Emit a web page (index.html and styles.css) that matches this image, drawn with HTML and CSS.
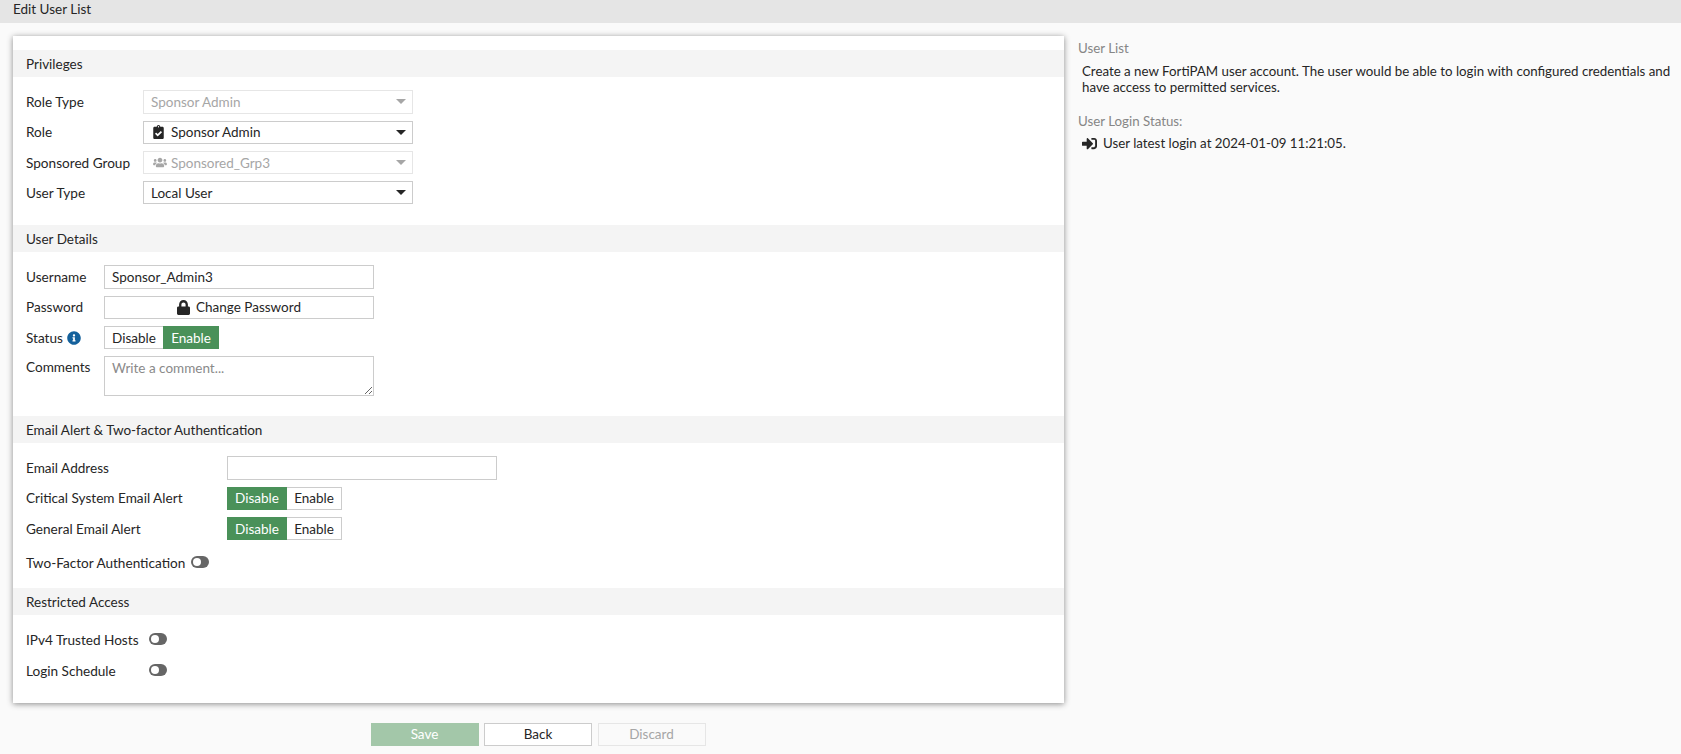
FILE: index.html
```html
<!DOCTYPE html>
<html lang="en">
<head>
<meta charset="utf-8">
<title>Edit User List</title>
<link rel="stylesheet" href="styles.css">
</head>
<body>
<header class="topbar">Edit User List</header>
<div class="page">
  <main class="main">
    <form class="card">
      <section class="section">
        <h2 class="bar">Privileges</h2>
        <div class="fields">
          <div class="row"><span class="label label-w1">Role Type</span>
            <div class="select select-off"><span class="select-text">Sponsor Admin</span><i class="caret"></i></div></div>
          <div class="row"><span class="label label-w1">Role</span>
            <div class="select"><span class="select-text"><svg class="ico ico-clip" viewBox="0 0 384 512"><path d="M336 64h-80c0-35.300-28.700-64-64-64s-64 28.700-64 64H48C21.500 64 0 85.500 0 112v352c0 26.500 21.500 48 48 48h288c26.500 0 48-21.500 48-48V112c0-26.500-21.500-48-48-48zM192 40c13.300 0 24 10.700 24 24s-10.700 24-24 24-24-10.700-24-24 10.700-24 24-24zm121.200 231.800l-143 141.800c-4.700 4.700-12.300 4.600-17-.1l-82.600-83.300c-4.700-4.700-4.600-12.300.1-17L99.100 285c4.700-4.700 12.300-4.600 17 .1l46 46.400 106-105.200c4.700-4.700 12.300-4.600 17 .1l28.200 28.400c4.700 4.800 4.600 12.300-.1 17z"/></svg>Sponsor Admin</span><i class="caret"></i></div></div>
          <div class="row"><span class="label label-w1">Sponsored Group</span>
            <div class="select select-off"><span class="select-text"><svg class="ico ico-users" viewBox="0 0 640 512"><path d="M96 224c35.300 0 64-28.700 64-64s-28.700-64-64-64-64 28.700-64 64 28.700 64 64 64zm448 0c35.300 0 64-28.700 64-64s-28.700-64-64-64-64 28.700-64 64 28.700 64 64 64zm32 32h-64c-17.600 0-33.500 7.100-45.100 18.600 40.300 22.100 68.900 62 75.100 109.400h66c17.700 0 32-14.300 32-32v-32c0-35.300-28.700-64-64-64zm-256 0c61.900 0 112-50.100 112-112S381.900 32 320 32 208 82.100 208 144s50.100 112 112 112zm76.800 32h-8.300c-20.800 10-43.900 16-68.500 16s-47.600-6-68.500-16h-8.300C179.600 288 128 339.600 128 403.200V432c0 26.500 21.500 48 48 48h288c26.500 0 48-21.500 48-48v-28.800c0-63.600-51.600-115.200-115.200-115.200zm-223.700-13.400C161.500 263.100 145.600 256 128 256H64c-35.300 0-64 28.700-64 64v32c0 17.700 14.300 32 32 32h65.900c6.300-47.400 34.900-87.300 75.200-109.400z"/></svg>Sponsored_Grp3</span><i class="caret"></i></div></div>
          <div class="row"><span class="label label-w1">User Type</span>
            <div class="select"><span class="select-text">Local User</span><i class="caret"></i></div></div>
        </div>
      </section>

      <section class="section">
        <h2 class="bar">User Details</h2>
        <div class="fields">
          <div class="row"><span class="label label-w2">Username</span>
            <input class="input" type="text" value="Sponsor_Admin3"></div>
          <div class="row"><span class="label label-w2">Password</span>
            <button class="wide-btn" type="button"><svg class="ico ico-lock" viewBox="0 0 448 512"><path d="M400 224h-24v-72C376 68.200 307.800 0 224 0S72 68.200 72 152v72H48c-26.500 0-48 21.500-48 48v192c0 26.500 21.500 48 48 48h352c26.500 0 48-21.500 48-48V272c0-26.500-21.500-48-48-48zm-104 0H152v-72c0-39.700 32.300-72 72-72s72 32.300 72 72v72z"/></svg>Change Password</button></div>
          <div class="row"><span class="label label-w2">Status <svg class="ico-info" viewBox="0 0 512 512"><path d="M256 8C119 8 8 119.100 8 256c0 137 111 248 248 248s248-111 248-248C504 119.100 393 8 256 8zm0 110c23.200 0 42 18.800 42 42s-18.800 42-42 42-42-18.800-42-42 18.800-42 42-42zm56 254c0 6.600-5.400 12-12 12h-88c-6.600 0-12-5.400-12-12v-24c0-6.600 5.400-12 12-12h12v-64h-12c-6.600 0-12-5.400-12-12v-24c0-6.600 5.400-12 12-12h64c6.600 0 12 5.400 12 12v100h12c6.600 0 12 5.400 12 12v24z"/></svg></span>
            <div class="seg"><span class="seg-item seg-d">Disable</span><span class="seg-item seg-e seg-on">Enable</span></div></div>
          <div class="row row-top"><span class="label label-w2 label-top">Comments</span>
            <textarea class="comment" placeholder="Write a comment..."></textarea></div>
        </div>
      </section>

      <section class="section">
        <h2 class="bar">Email Alert &amp; Two-factor Authentication</h2>
        <div class="fields fields-tight">
          <div class="row"><span class="label label-w3">Email Address</span>
            <input class="input" type="text"></div>
          <div class="row"><span class="label label-w3">Critical System Email Alert</span>
            <div class="seg"><span class="seg-item seg-d2 seg-on">Disable</span><span class="seg-item seg-e2">Enable</span></div></div>
          <div class="row"><span class="label label-w3">General Email Alert</span>
            <div class="seg"><span class="seg-item seg-d2 seg-on">Disable</span><span class="seg-item seg-e2">Enable</span></div></div>
          <div class="row row-switch row-switch-first"><span class="label label-auto">Two-Factor Authentication</span><span class="switch"></span></div>
        </div>
      </section>

      <section class="section">
        <h2 class="bar">Restricted Access</h2>
        <div class="fields fields-switches">
          <div class="row row-switch"><span class="label label-w4">IPv4 Trusted Hosts</span><span class="switch"></span></div>
          <div class="row row-switch"><span class="label label-w4">Login Schedule</span><span class="switch"></span></div>
        </div>
      </section>
    </form>

    <div class="actions">
      <button class="action action-save" type="button">Save</button>
      <button class="action" type="button">Back</button>
      <button class="action action-off" type="button">Discard</button>
    </div>
  </main>

  <aside class="help">
    <h3 class="help-title">User List</h3>
    <p class="help-text">Create a new FortiPAM user account. The user would be able to login with configured credentials and have access to permitted services.</p>
    <h3 class="help-title help-title-2">User Login Status:</h3>
    <p class="help-login"><svg class="ico ico-login" viewBox="0 0 512 512"><path d="M416 448h-84c-6.600 0-12-5.400-12-12v-40c0-6.600 5.400-12 12-12h84c17.700 0 32-14.300 32-32V160c0-17.700-14.300-32-32-32h-84c-6.600 0-12-5.400-12-12V76c0-6.600 5.400-12 12-12h84c53 0 96 43 96 96v192c0 53-43 96-96 96zm-47-201L201 79c-15-15-41-4.500-41 17v96H24c-13.300 0-24 10.700-24 24v96c0 13.300 10.700 24 24 24h136v96c0 21.500 26 32 41 17l168-168c9.300-9.400 9.300-24.600 0-34z"/></svg>User latest login at 2024-01-09 11:21:05.</p>
  </aside>
</div>
</body>
</html>
```

FILE: styles.css
```css
* { box-sizing: border-box; }
html, body { margin: 0; padding: 0; }
body {
  height: 754px;
  overflow: hidden;
  background: #fafafa;
  color: #262626;
  font: 13.5px/16px Lato, "Open Sans", sans-serif;
}
.topbar {
  height: 23px;
  padding: 1px 13px 0;
  background: #e5e5e5;
  line-height: 16px;
}
.page { display: flex; align-items: flex-start; }
.main { width: 1051px; margin: 13px 0 0 13px; flex: none; }
.card {
  display: block;
  padding-top: 14px;
  background: #fff;
  box-shadow: 0 1px 6px rgba(0, 0, 0, .45);
}
.bar {
  margin: 0;
  height: 27px;
  padding: 0 13px;
  background: #f4f4f4;
  font: inherit;
  line-height: 28px;
}
.fields {
  display: flex;
  flex-direction: column;
  gap: 7px;
  padding: 13.3px 13px 20.5px;
}
.fields-tight { padding-bottom: 12px; }
.fields-switches { gap: 6px; padding: 13px 13px 19px; }
.row { display: flex; align-items: center; height: 23.3px; }
.row-top { align-items: flex-start; height: 39.5px; }
.row-switch { height: 25px; }
.row-switch-first { margin-top: 3.6px; }
.label { flex: none; font-size: 13.6px; }
.label-top { padding-top: 3px; }
.label-w1 { width: 117px; }
.label-w2 { width: 78px; }
.label-w3 { width: 201px; }
.label-w4 { width: 123px; }
.label-auto { margin-right: 6px; }

.select {
  display: flex;
  align-items: center;
  justify-content: space-between;
  width: 270px;
  height: 100%;
  padding: 0 6px 0 7px;
  background: #fff;
  border: 1px solid #ccc;
}
.select-text { display: flex; align-items: center; }
.select-off { border-color: #e6e6e6; color: #a6a6a6; }
.caret {
  width: 0;
  height: 0;
  border: 5px solid transparent;
  border-top: 5px solid #262626;
  border-bottom: 0;
}
.select-off .caret { border-top-color: #a6a6a6; }

.ico { fill: currentColor; flex: none; }
.ico-clip { width: 11px; height: 14px; margin: 0 7px 0 2px; }
.ico-users { width: 14px; height: 11px; margin: 0 4px 0 2px; }
.ico-lock { width: 13px; height: 15px; margin-right: 6px; }
.ico-login { width: 15px; height: 15px; margin-right: 6px; }
.ico-info { width: 14px; height: 14px; margin-left: 1px; fill: #14619c; vertical-align: -2px; }

.input, .wide-btn, .comment {
  width: 270px;
  background: #fff;
  border: 1px solid #ccc;
  color: #262626;
  font: 13.5px/16px Lato, "Open Sans", sans-serif;
  outline: 0;
  border-radius: 0;
}
.input { height: 100%; padding: 0 7px; }
.wide-btn {
  display: flex;
  align-items: center;
  justify-content: center;
  height: 100%;
  padding: 0;
}
.comment { display: block; height: 100%; padding: 3px 7px; }
.comment::placeholder { color: #8a8a8a; opacity: 1; }

.seg { display: flex; height: 100%; }
.seg-item {
  display: flex;
  align-items: center;
  justify-content: center;
  background: #fff;
  border: 1px solid #ccc;
}
.seg-d { width: 59px; border-right: 0; }
.seg-e { width: 56px; }
.seg-d2 { width: 60px; }
.seg-e2 { width: 55px; border-left: 0; }
.seg-on { background: #4a9159; border-color: #4a9159; color: #fff; }

.switch {
  position: relative;
  display: block;
  flex: none;
  width: 18px;
  height: 12px;
  margin-top: -2px;
  border-radius: 6px;
  background: #666;
}
.switch::after {
  content: "";
  position: absolute;
  left: 2px;
  top: 2px;
  width: 8px;
  height: 8px;
  border-radius: 50%;
  background: #fff;
}

.actions { display: flex; justify-content: center; gap: 5.5px; margin-top: 20px; padding-right: 1px; }
.action {
  width: 108px;
  height: 23px;
  padding: 0;
  background: #fff;
  border: 1px solid #ccc;
  color: #262626;
  font: 13.5px/16px Lato, "Open Sans", sans-serif;
}
.action-save { background: #a3c7a9; border-color: #a3c7a9; color: #fff; }
.action-off { background: #fafafa; border-color: #e6e6e6; color: #a6a6a6; }

.help { flex: 1; margin: 17px 0 0 14px; padding-right: 8px; font-size: 13.3px; }
.help-title { margin: 0; font: inherit; color: #868686; }
.help-title-2 { margin-top: 18px; }
.help-text { margin: 7px 0 0 4px; }
.help-login { display: flex; align-items: center; margin: 6px 0 0 4px; }
```
